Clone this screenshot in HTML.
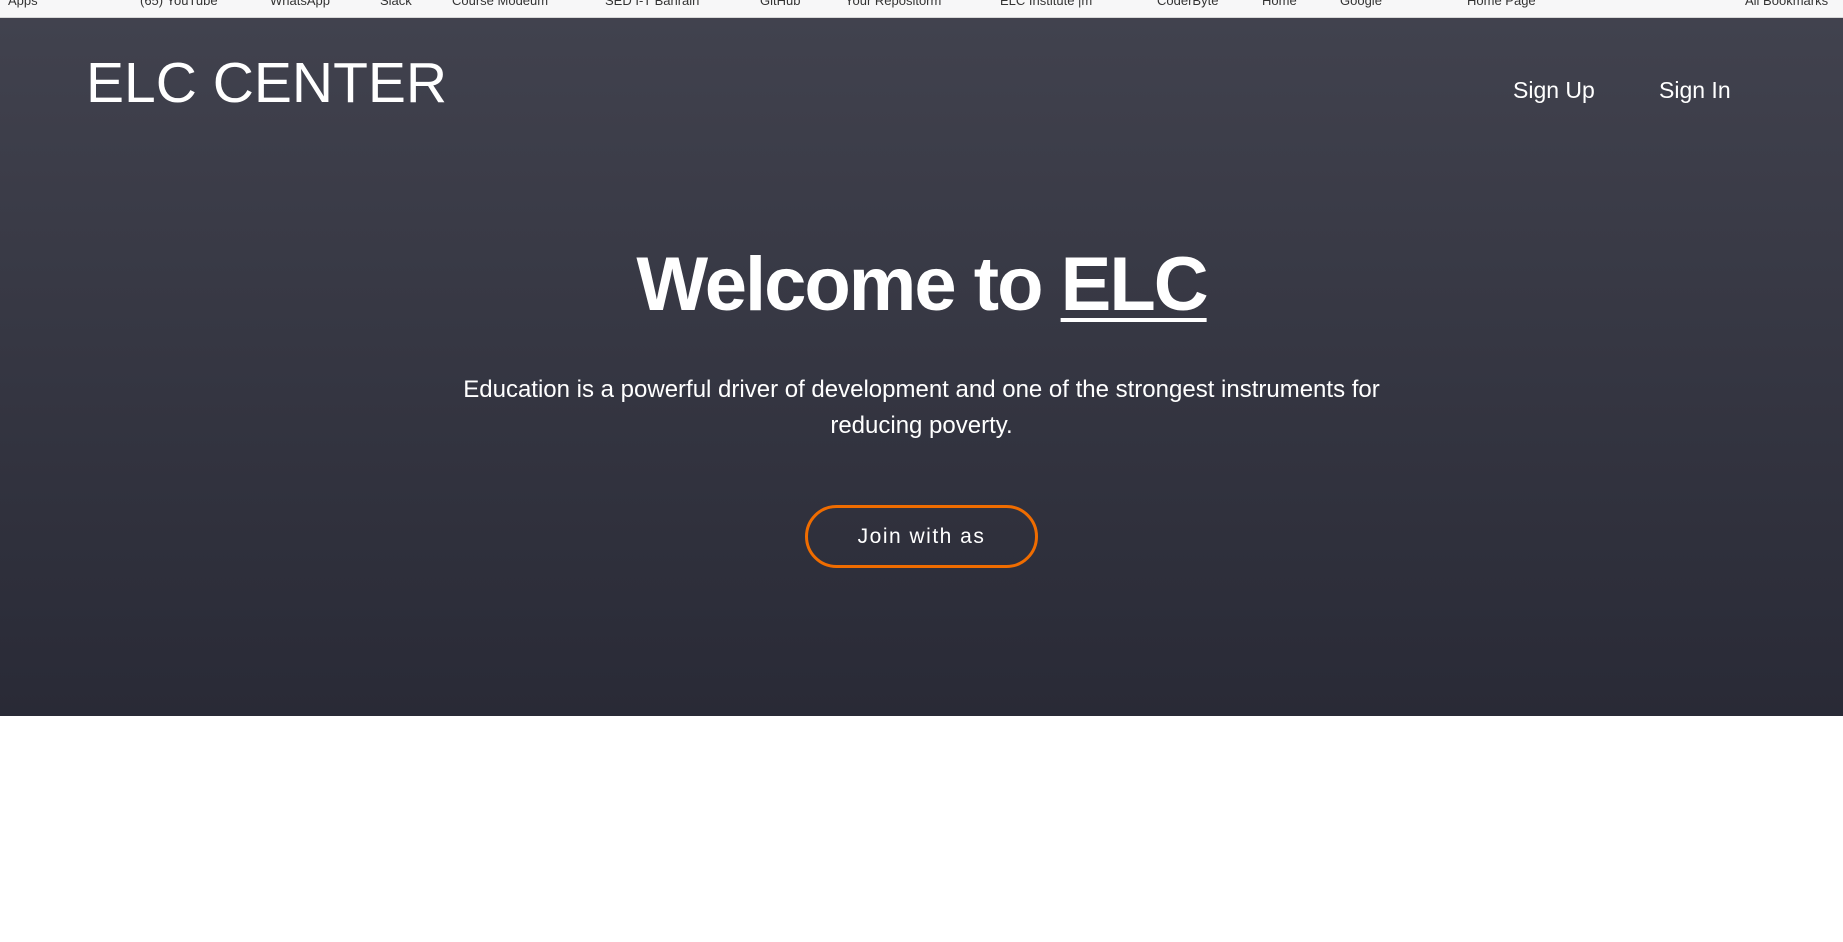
<!DOCTYPE html>
<html><head><meta charset="utf-8"><style>
html,body{margin:0;padding:0;width:1843px;height:942px;overflow:hidden;background:#fff;font-family:"Liberation Sans",sans-serif}
.bar{position:absolute;left:0;top:0;width:1843px;height:17px;background:#f7f7f8;border-bottom:1px solid #d8d8d8;font-size:13px;color:#333;overflow:hidden}
.bar span{position:absolute;top:-7px;white-space:nowrap}
.hero{position:absolute;left:0;top:18px;width:1843px;height:698px;background:linear-gradient(#41424e,#292a36)}
.logo{position:absolute;left:86px;top:30px;font-size:57px;color:#fff;line-height:70px}
.nav{position:absolute;top:58px;font-size:23px;color:#fff;line-height:28px}
h1{position:absolute;left:0;width:1843px;top:240px;margin:0;text-align:center;font-size:76px;font-weight:bold;color:#fff;line-height:90px;letter-spacing:-2px}
h1 u{text-decoration-thickness:4px;text-underline-offset:8px}
p{position:absolute;left:421px;width:1001px;top:372px;margin:0;text-align:center;font-size:24px;line-height:36px;color:#fff}
.btn{position:absolute;left:805px;top:505px;width:227px;height:57px;border:3px solid #ef6c00;border-radius:32px;color:#fff;font-size:21px;letter-spacing:1.5px;text-align:center;line-height:57px}
</style></head><body>
<div class="bar">
<span style="left:8px">Apps</span><span style="left:140px">(65) YouTube</span><span style="left:270px">WhatsApp</span><span style="left:380px">Slack</span><span style="left:452px">Course Modeum</span><span style="left:605px">SED I-T Bahrain</span><span style="left:760px">GitHub</span><span style="left:845px">Your Repositorm</span><span style="left:1000px">ELC Institute |m</span><span style="left:1157px">CoderByte</span><span style="left:1262px">Home</span><span style="left:1340px">Google</span><span style="left:1467px">Home Page</span><span style="left:1745px">All Bookmarks</span>
</div>
<div class="hero">
<div class="logo">ELC CENTER</div>
<div class="nav" style="left:1513px">Sign Up</div>
<div class="nav" style="left:1659px">Sign In</div>
</div>
<h1>Welcome to <u>ELC</u></h1>
<p>Education is a powerful driver of development and one of the strongest instruments for reducing poverty.</p>
<div class="btn">Join with as</div>
</body></html>
